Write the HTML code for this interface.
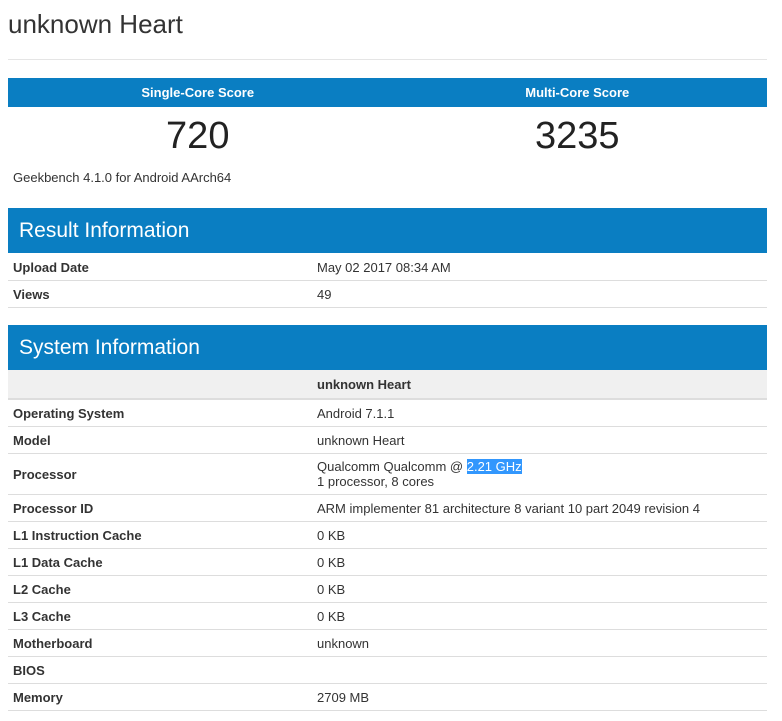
<!DOCTYPE html>
<html><head><style>
body{margin:0;background:#fff;font-family:"Liberation Sans",Arial,sans-serif;color:#333;width:782px;overflow:hidden}
.w{position:absolute;left:8px;width:759px}
h1{position:absolute;left:8px;top:9px;margin:0;font-size:26px;font-weight:normal;color:#333}
.hr{position:absolute;left:8px;width:759px;top:59px;border-top:1px solid #e5e5e5}
.sb{top:78px;height:29px;background:#0a7ec2;color:#fff;font-weight:bold;font-size:13px;display:flex}
.sb div,.sn div{flex:1;text-align:center}
.sb div{line-height:29px}
.sn{top:114px;display:flex;font-size:38px;line-height:44px;color:#222}
.gb{top:170px;font-size:13px;left:13px}
.bar{height:45px;background:#0a7ec2;color:#fff;font-size:21px;line-height:45px;padding-left:11px;box-sizing:border-box}
table{border-collapse:collapse;width:759px;font-size:13px;table-layout:fixed}
td{border-bottom:1px solid #ddd;height:26px;padding:0 5px;vertical-align:middle}
td:first-child{font-weight:bold;width:304px;box-sizing:border-box}
.nm td{background:#f0f0f0;border-bottom:2px solid #ddd;height:28px;font-weight:bold}
.sel{background:#3297fd;color:#fff}
</style></head><body>
<h1>unknown Heart</h1>
<div class="hr"></div>
<div class="w sb"><div>Single-Core Score</div><div>Multi-Core Score</div></div>
<div class="w sn"><div>720</div><div>3235</div></div>
<div class="w gb">Geekbench 4.1.0 for Android AArch64</div>
<div class="w" style="top:208px">
<div class="bar">Result Information</div>
<table><tr><td style="padding-top:1px">Upload Date</td><td style="padding-top:1px">May 02 2017 08:34 AM</td></tr>
<tr><td>Views</td><td>49</td></tr></table>
</div>
<div class="w" style="top:325px">
<div class="bar">System Information</div>
<table>
<tr class="nm"><td></td><td>unknown Heart</td></tr>
<tr><td>Operating System</td><td>Android 7.1.1</td></tr>
<tr><td>Model</td><td>unknown Heart</td></tr>
<tr><td style="height:41px">Processor</td><td>Qualcomm Qualcomm @ <span class="sel">2.21 GHz </span><br>1 processor, 8 cores</td></tr>
<tr><td>Processor ID</td><td>ARM implementer 81 architecture 8 variant 10 part 2049 revision 4</td></tr>
<tr><td>L1 Instruction Cache</td><td>0 KB</td></tr>
<tr><td>L1 Data Cache</td><td>0 KB</td></tr>
<tr><td>L2 Cache</td><td>0 KB</td></tr>
<tr><td>L3 Cache</td><td>0 KB</td></tr>
<tr><td>Motherboard</td><td>unknown</td></tr>
<tr><td>BIOS</td><td></td></tr>
<tr><td>Memory</td><td>2709 MB</td></tr>
</table>
</div>
</body></html>
